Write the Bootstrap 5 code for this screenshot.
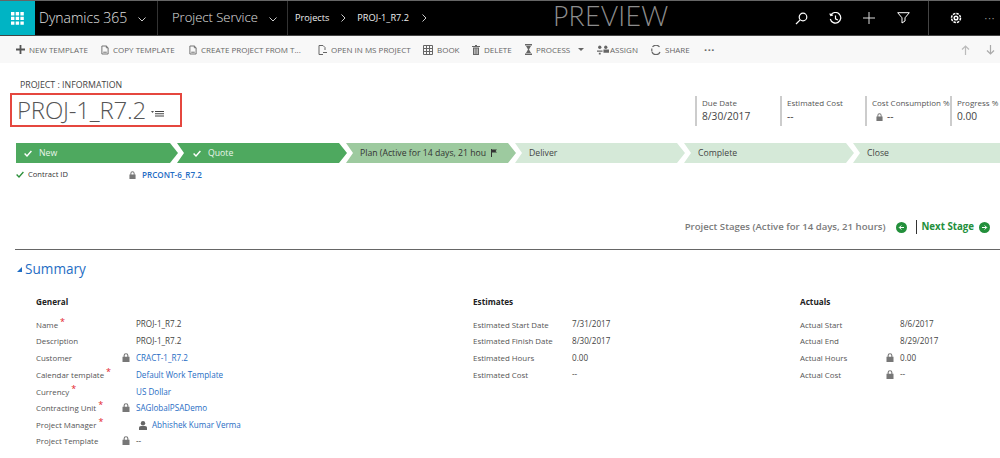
<!DOCTYPE html>
<html lang="en">
<head>
<meta charset="utf-8">
<title>PROJ-1_R7.2</title>
<link href="https://cdn.jsdelivr.net/npm/bootstrap@5.3.0/dist/css/bootstrap.min.css" rel="stylesheet">
<style>
html,body{height:458px;overflow:hidden}
body{font-family:"Open Sans","Noto Sans",sans-serif;font-size:8.4px;color:#444;background:#fff;line-height:1.2}
.defs-holder{width:0;height:0;overflow:hidden}
.topbar{height:36px;background:#000;border-top:1px solid #666;border-bottom:1px solid #444;color:#e0e0e0}
.topbar>*{flex:none}
.tile{width:35px;background:#00b4c4}
.sec-dyn{width:123px;border-right:1px solid #333;padding-left:4px;font-size:14px;font-weight:300}
.sec-ps{width:130px;border-right:1px solid #333;padding-left:14px;font-size:13px;font-weight:300}
.chev{margin-left:11px;margin-top:3px}
.crumbs{width:265px;padding-left:7px;font-size:9.2px;color:#eee}
.crumb-a{margin:0 11px 0 12px}
.crumb-b{margin-left:13px}
.preview-mark{width:231px;font-family:"Lato","Open Sans",sans-serif;font-weight:300;font-size:26.5px;letter-spacing:.3px;color:#8d8d8d;line-height:30px}
.top-ic{width:34px}
.top-sep{width:9px;height:100%;border-right:1px solid #444}
.top-gear{margin-left:10px}
.top-dots{color:#999;font-size:10px;letter-spacing:1px}
.cmdbar{height:27px;background:#f8f8f8;padding-left:16px;color:#666;font-size:8px;display:grid;grid-template-columns:85px 88px 129px 105px 49px 53px 72px 54px 53px 50px 1fr;align-items:center}
.cmd-i{display:flex;align-items:center;gap:4px;white-space:nowrap}
.cmd-dots{font-size:11px;font-weight:700;letter-spacing:.5px}
.cmd-tight{gap:1px}
.cmd-arrows{padding-right:5px}
.head-zone{height:72px;padding:16px 3px 0 10px}
.crumb-title{font-size:8.8px;color:#444;margin-left:10px;height:14px;line-height:12px;margin-top:0}
.title-box{width:172px;height:34px;border:2px solid #e5473f;padding-left:5px;font-size:24px;font-weight:300;color:#555;line-height:28px;letter-spacing:-.2px}
.title-ic{margin-left:5px;margin-top:8px}
.kpi{border-left:2px solid #ccc;height:30px;padding-left:5px;margin-top:17px;width:85px;white-space:nowrap;overflow:visible}
.kpi-l{font-size:8px;color:#555;line-height:13px}
.kpi-v{font-size:10.2px;color:#444;line-height:15px}
.kpi-last{width:47px}
.proc{height:20px;margin-top:8px;padding-left:16px;overflow:hidden;font-size:8.7px}
.stage{height:20px;width:170px;margin-right:-1px;flex:none;display:flex;align-items:center;padding-left:14px;color:#444;clip-path:polygon(0 0,calc(100% - 8px) 0,100% 50%,calc(100% - 8px) 100%,0 100%,7px 50%)}
.st-done{background:#4ea95f;color:#e9f5eb}
.st-act{background:#9dca9f;color:#333;white-space:nowrap}
.st-todo{background:#d5e9d8}
.st-first{width:162px;padding-left:8px;clip-path:polygon(0 0,calc(100% - 8px) 0,100% 50%,calc(100% - 8px) 100%,0 100%)}
.st-q{padding-left:16px}
.st-last{width:170px;margin-right:0;clip-path:polygon(0 0,100% 0,100% 100%,0 100%,7px 50%)}
.st-check{margin-right:7px}
.st-flag{margin-left:5px}
.contract{padding-left:16px;height:16px;margin-top:4px;color:#333;font-size:7.6px}
.c-l{width:113px;display:flex;gap:4px;align-items:center}
.lnk{color:#1f6dc4}
.c-link{font-weight:600;font-size:8.1px;margin-left:6px}
.stages-row{height:18px;margin-top:35px;padding-right:10px;justify-content:flex-end}
.st-text{font-weight:600;font-size:9.6px;color:#7a7a7a;margin-right:11px}
.st-sep{width:1px;height:14px;background:#333;margin:0 4px 0 9px}
.st-next{font-weight:700;font-size:9.7px;color:#238f3b;margin-right:5px}
.rule{height:1px;background:#666;margin:13px 0 0 15px;border:0;opacity:1}
.sum-t{font-size:13.6px;color:#1f6dc4;padding-left:17px;height:22px;line-height:20px;margin-top:8px;gap:3px}
.form-cols{margin-top:16px;padding-left:36px;font-size:7.9px;color:#555}
.fc1{width:437px}.fc2{width:327px}.fc3{width:180px}
.fh{font-weight:700;color:#222;font-size:8.2px;height:21px;line-height:12px}
.fr{height:16.65px;display:flex;align-items:center;white-space:nowrap}
.fl{flex:none}
.fc1 .fl{width:86px}.fc2 .fl{width:99px}.fc3 .fl{width:86px}
.flk{width:14px;flex:none;display:flex;padding-bottom:2px}
.fv{color:#444;font-size:8.1px;margin-bottom:2px}
.fr .lnk{font-size:8.1px;margin-bottom:1px}
.req{color:#e3222b;font-size:9px;line-height:1;position:relative;top:-3px;margin-left:2px}
.person{margin:0 5px 0 3px}
</style>
</head>
<body>
<svg class="defs-holder d-block position-absolute">
<symbol id="lk" viewBox="0 0 8 9"><path fill="#777" d="M1.600 3.800V2.600a2.400 2.400 0 0 1 4.800 0v1.200H7.500V9H.5V3.800zM2.700 3.800h2.600V2.600a1.300 1.300 0 0 0-2.600 0z"/></symbol>
<symbol id="doc" viewBox="0 0 9 10"><path fill="none" stroke="#666" d="M1 .5h5l2 2v7H1zM6 .5v2h2M2.500 7.500h4"/></symbol>
</svg>

<header class="topbar d-flex align-items-stretch">
  <div class="tile d-flex align-items-center justify-content-center">
    <svg width="13" height="13" viewBox="0 0 13 13" fill="#fff"><path d="M0 0h3.400v3.400H0zM4.700 0h3.400v3.400H4.700zM9.400 0h3.400v3.400H9.400zM0 4.700h3.400v3.400H0zM4.700 4.700h3.400v3.400H4.700zM9.400 4.700h3.400v3.400H9.400zM0 9.400h3.400v3.400H0zM4.700 9.400h3.400v3.400H4.700zM9.400 9.400h3.400v3.400H9.400z"/></svg>
  </div>
  <div class="sec-dyn d-flex align-items-center"><span>Dynamics 365</span><svg class="chev" width="8" height="5" viewBox="0 0 8 5"><path d="M.5.5 4 4 7.500.5" fill="none" stroke="#ccc"/></svg></div>
  <div class="sec-ps d-flex align-items-center"><span>Project Service</span><svg class="chev" width="8" height="5" viewBox="0 0 8 5"><path d="M.5.5 4 4 7.500.5" fill="none" stroke="#ccc"/></svg></div>
  <div class="crumbs d-flex align-items-center"><span>Projects</span><svg class="crumb-a" width="5" height="8" viewBox="0 0 5 8"><path d="M.5.5 4 4 .5 7.500" fill="none" stroke="#ccc"/></svg><span>PROJ-1_R7.2</span><svg class="crumb-b" width="5" height="8" viewBox="0 0 5 8"><path d="M.5.5 4 4 .5 7.500" fill="none" stroke="#ccc"/></svg></div>
  <div class="preview-mark">PREVIEW</div>
  <div class="top-ic d-flex align-items-center justify-content-center"><svg width="13" height="13" viewBox="0 0 13 13" fill="none" stroke="#fff" stroke-width="1.200"><circle cx="8" cy="5" r="3.800"/><path d="M5.200 7.800 1 12"/></svg></div>
  <div class="top-ic d-flex align-items-center justify-content-center"><svg width="13" height="13" viewBox="0 0 13 13" fill="none" stroke="#fff" stroke-width="1.200"><path d="M1.800 3.200A5.300 5.300 0 1 1 1.300 7M.8 1.500 1.800 3.500 4 3M6.500 3.500v3.300l2.300 1.300"/></svg></div>
  <div class="top-ic d-flex align-items-center justify-content-center"><svg width="12" height="12" viewBox="0 0 12 12" stroke="#ddd"><path d="M6 0v12M0 6h12"/></svg></div>
  <div class="top-ic d-flex align-items-center justify-content-center"><svg width="13" height="12" viewBox="0 0 13 12" fill="none" stroke="#fff"><path d="M.7.700h11.600L8 5.800V9L5 11V5.800z"/></svg></div>
  <div class="top-sep"></div>
  <div class="top-ic top-gear d-flex align-items-center justify-content-center"><svg width="12" height="12" viewBox="0 0 12 12" fill="none" stroke="#fff" stroke-width="1.500"><circle cx="6" cy="6" r="1.800"/><circle cx="6" cy="6" r="4.500" stroke-dasharray="2.500 1"/></svg></div>
  <div class="top-ic top-dots d-flex align-items-center justify-content-center">···</div>
</header>

<nav class="cmdbar">
  <div class="cmd-i"><svg width="9" height="9" viewBox="0 0 9 9"><path d="M4.500 0v9M0 4.500h9" stroke="#555" stroke-width="1.800"/></svg><span>NEW TEMPLATE</span></div>
  <div class="cmd-i"><svg width="8" height="10"><use href="#doc"/></svg><span>COPY TEMPLATE</span></div>
  <div class="cmd-i"><svg width="8" height="10"><use href="#doc"/></svg><span>CREATE PROJECT FROM T...</span></div>
  <div class="cmd-i"><svg width="9" height="10" viewBox="0 0 9 10" fill="none" stroke="#666"><path d="M5 9.500H1V.5h4l2 2V5M5 7.500h4"/></svg><span>OPEN IN MS PROJECT</span></div>
  <div class="cmd-i"><svg width="10" height="10" viewBox="0 0 10 10" fill="none" stroke="#666"><path d="M.5.5h9v9h-9zM.5 3.500h9M.5 6.500h9M3.500.5v9M6.500.5v9"/></svg><span>BOOK</span></div>
  <div class="cmd-i"><svg width="8" height="10" viewBox="0 0 8 10" fill="#666"><path d="M0 1h8v1H0zM3 0h2v1H3zM1 2.500h6V10H1z"/><path d="M2.600 3.500v5.500M4 3.500v5.500M5.400 3.500v5.500" stroke="#f8f8f8" stroke-width=".6"/></svg><span>DELETE</span></div>
  <div class="cmd-i"><svg width="7" height="11" viewBox="0 0 7 11" fill="#666"><path d="M0 0h7v1.500H0zM0 9.500h7V11H0zM1 2h5L4 5.500 6 9H1l2-3.500z"/></svg><span>PROCESS</span><svg class="ms-1" width="6" height="3" viewBox="0 0 6 3"><path d="M0 0h6L3 3z" fill="#666"/></svg></div>
  <div class="cmd-i cmd-tight"><svg width="12" height="10" viewBox="0 0 13 10" fill="#666"><circle cx="3" cy="2" r="1.800"/><circle cx="9.500" cy="2" r="1.800"/><path d="M0 5.500h6V7H0zM7 4.500h6V8H7zM2 8h2v2H2z"/></svg><span>ASSIGN</span></div>
  <div class="cmd-i"><svg width="10" height="10" viewBox="0 0 10 10" fill="none" stroke="#666" stroke-width="1.200"><path d="M8.500 2A4.300 4.300 0 0 0 1.500 2M9 7A4.300 4.300 0 0 1 1 7M.8 3.500v3"/></svg><span>SHARE</span></div>
  <div class="cmd-i cmd-dots">···</div>
  <div class="cmd-arrows d-flex justify-content-end align-items-center gap-3">
    <svg width="9" height="10" viewBox="0 0 9 10" fill="none" stroke="#bbb" stroke-width="1.200"><path d="M4.500 10V1M1 4.500 4.500 1 8 4.500"/></svg>
    <svg width="9" height="10" viewBox="0 0 9 10" fill="none" stroke="#aaa" stroke-width="1.200"><path d="M4.500 0v9M1 5.500 4.500 9 8 5.500"/></svg>
  </div>
</nav>

<section class="head-zone d-flex justify-content-between">
  <div>
    <div class="crumb-title">PROJECT : INFORMATION</div>
    <div class="title-box d-flex align-items-center">PROJ-1_R7.2<svg class="title-ic" width="13" height="8" viewBox="0 0 13 8"><path d="M0 1h3L1.500 3z" fill="#555"/><path d="M4 1.500h9M4 3.700h9M4 6h9" stroke="#444" stroke-width="1.100"/></svg></div>
  </div>
  <div class="d-flex">
    <div class="kpi"><div class="kpi-l">Due Date</div><div class="kpi-v">8/30/2017</div></div>
    <div class="kpi"><div class="kpi-l">Estimated Cost</div><div class="kpi-v">--</div></div>
    <div class="kpi"><div class="kpi-l">Cost Consumption %</div><div class="kpi-v d-flex align-items-center"><svg class="ms-1 me-1" width="7" height="8"><use href="#lk"/></svg>--</div></div>
    <div class="kpi kpi-last"><div class="kpi-l">Progress %</div><div class="kpi-v">0.00</div></div>
  </div>
</section>

<section class="proc d-flex">
  <div class="stage st-done st-first"><svg class="st-check" width="8" height="7" viewBox="0 0 8 7"><path d="M.6 3.500 3 6 7.400 1" fill="none" stroke="#fff" stroke-width="1.400"/></svg>New</div>
  <div class="stage st-done st-q"><svg class="st-check" width="8" height="7" viewBox="0 0 8 7"><path d="M.6 3.500 3 6 7.400 1" fill="none" stroke="#fff" stroke-width="1.400"/></svg>Quote</div>
  <div class="stage st-act"><span>Plan (Active for 14 days, 21 hou</span><svg class="st-flag" width="6" height="8" viewBox="0 0 6 8"><path d="M.5 0v8" stroke="#333"/><path d="M1 .5h5L4.500 2 6 3.500H1z" fill="#333"/></svg></div>
  <div class="stage st-todo">Deliver</div>
  <div class="stage st-todo">Complete</div>
  <div class="stage st-todo st-last">Close</div>
</section>

<section class="contract d-flex align-items-center">
  <div class="c-l"><svg width="8" height="7" viewBox="0 0 8 7"><path d="M.6 3.500 3 6 7.400 1" fill="none" stroke="#2b8f3a" stroke-width="1.300"/></svg><span>Contract ID</span></div>
  <svg width="7" height="8"><use href="#lk"/></svg>
  <a class="lnk c-link text-decoration-none" href="#">PRCONT-6_R7.2</a>
</section>

<section class="stages-row d-flex align-items-center">
  <span class="st-text">Project Stages (Active for 14 days, 21 hours)</span>
  <svg width="11" height="11" viewBox="0 0 11 11"><circle cx="5.500" cy="5.500" r="5.500" fill="#238f3b"/><path d="M8 5.500H3.500M5.300 3.500l-2 2 2 2" fill="none" stroke="#fff"/></svg>
  <span class="st-sep"></span>
  <span class="st-next">Next Stage</span>
  <svg width="11" height="11" viewBox="0 0 11 11"><circle cx="5.500" cy="5.500" r="5.500" fill="#238f3b"/><path d="M3 5.500h4.500M5.700 3.500l2 2-2 2" fill="none" stroke="#fff"/></svg>
</section>

<hr class="rule">

<div class="sum-t d-flex align-items-center"><svg width="5" height="5" viewBox="0 0 5 5"><path d="M5 0v5H0z" fill="#1f6dc4"/></svg><span>Summary</span></div>

<main class="form-cols d-flex">
  <div class="fc1">
    <div class="fh">General</div>
    <div class="fr"><span class="fl">Name<span class="req">*</span></span><span class="flk"></span><span class="fv">PROJ-1_R7.2</span></div>
    <div class="fr"><span class="fl">Description</span><span class="flk"></span><span class="fv">PROJ-1_R7.2</span></div>
    <div class="fr"><span class="fl">Customer</span><span class="flk"><svg width="8" height="9"><use href="#lk"/></svg></span><a class="lnk text-decoration-none" href="#">CRACT-1_R7.2</a></div>
    <div class="fr"><span class="fl">Calendar template<span class="req">*</span></span><span class="flk"></span><a class="lnk text-decoration-none" href="#">Default Work Template</a></div>
    <div class="fr"><span class="fl">Currency<span class="req">*</span></span><span class="flk"></span><a class="lnk text-decoration-none" href="#">US Dollar</a></div>
    <div class="fr"><span class="fl">Contracting Unit<span class="req">*</span></span><span class="flk"><svg width="8" height="9"><use href="#lk"/></svg></span><a class="lnk text-decoration-none" href="#">SAGlobalPSADemo</a></div>
    <div class="fr"><span class="fl">Project Manager<span class="req">*</span></span><span class="flk"></span><svg class="person" width="8" height="9" viewBox="0 0 8 9" fill="#666"><circle cx="4" cy="2.200" r="2.200"/><path d="M0 9V6.500C0 5 1.500 5 4 5s4 0 4 1.500V9z"/></svg><a class="lnk text-decoration-none" href="#">Abhishek Kumar Verma</a></div>
    <div class="fr"><span class="fl">Project Template</span><span class="flk"><svg width="8" height="9"><use href="#lk"/></svg></span><span class="fv">--</span></div>
  </div>
  <div class="fc2">
    <div class="fh">Estimates</div>
    <div class="fr"><span class="fl">Estimated Start Date</span><span class="fv">7/31/2017</span></div>
    <div class="fr"><span class="fl">Estimated Finish Date</span><span class="fv">8/30/2017</span></div>
    <div class="fr"><span class="fl">Estimated Hours</span><span class="fv">0.00</span></div>
    <div class="fr"><span class="fl">Estimated Cost</span><span class="fv">--</span></div>
  </div>
  <div class="fc3">
    <div class="fh">Actuals</div>
    <div class="fr"><span class="fl">Actual Start</span><span class="flk"></span><span class="fv">8/6/2017</span></div>
    <div class="fr"><span class="fl">Actual End</span><span class="flk"></span><span class="fv">8/29/2017</span></div>
    <div class="fr"><span class="fl">Actual Hours</span><span class="flk"><svg width="8" height="9"><use href="#lk"/></svg></span><span class="fv">0.00</span></div>
    <div class="fr"><span class="fl">Actual Cost</span><span class="flk"><svg width="8" height="9"><use href="#lk"/></svg></span><span class="fv">--</span></div>
  </div>
</main>
<script src="https://cdn.jsdelivr.net/npm/bootstrap@5.3.0/dist/js/bootstrap.bundle.min.js"></script>
</body>
</html>
